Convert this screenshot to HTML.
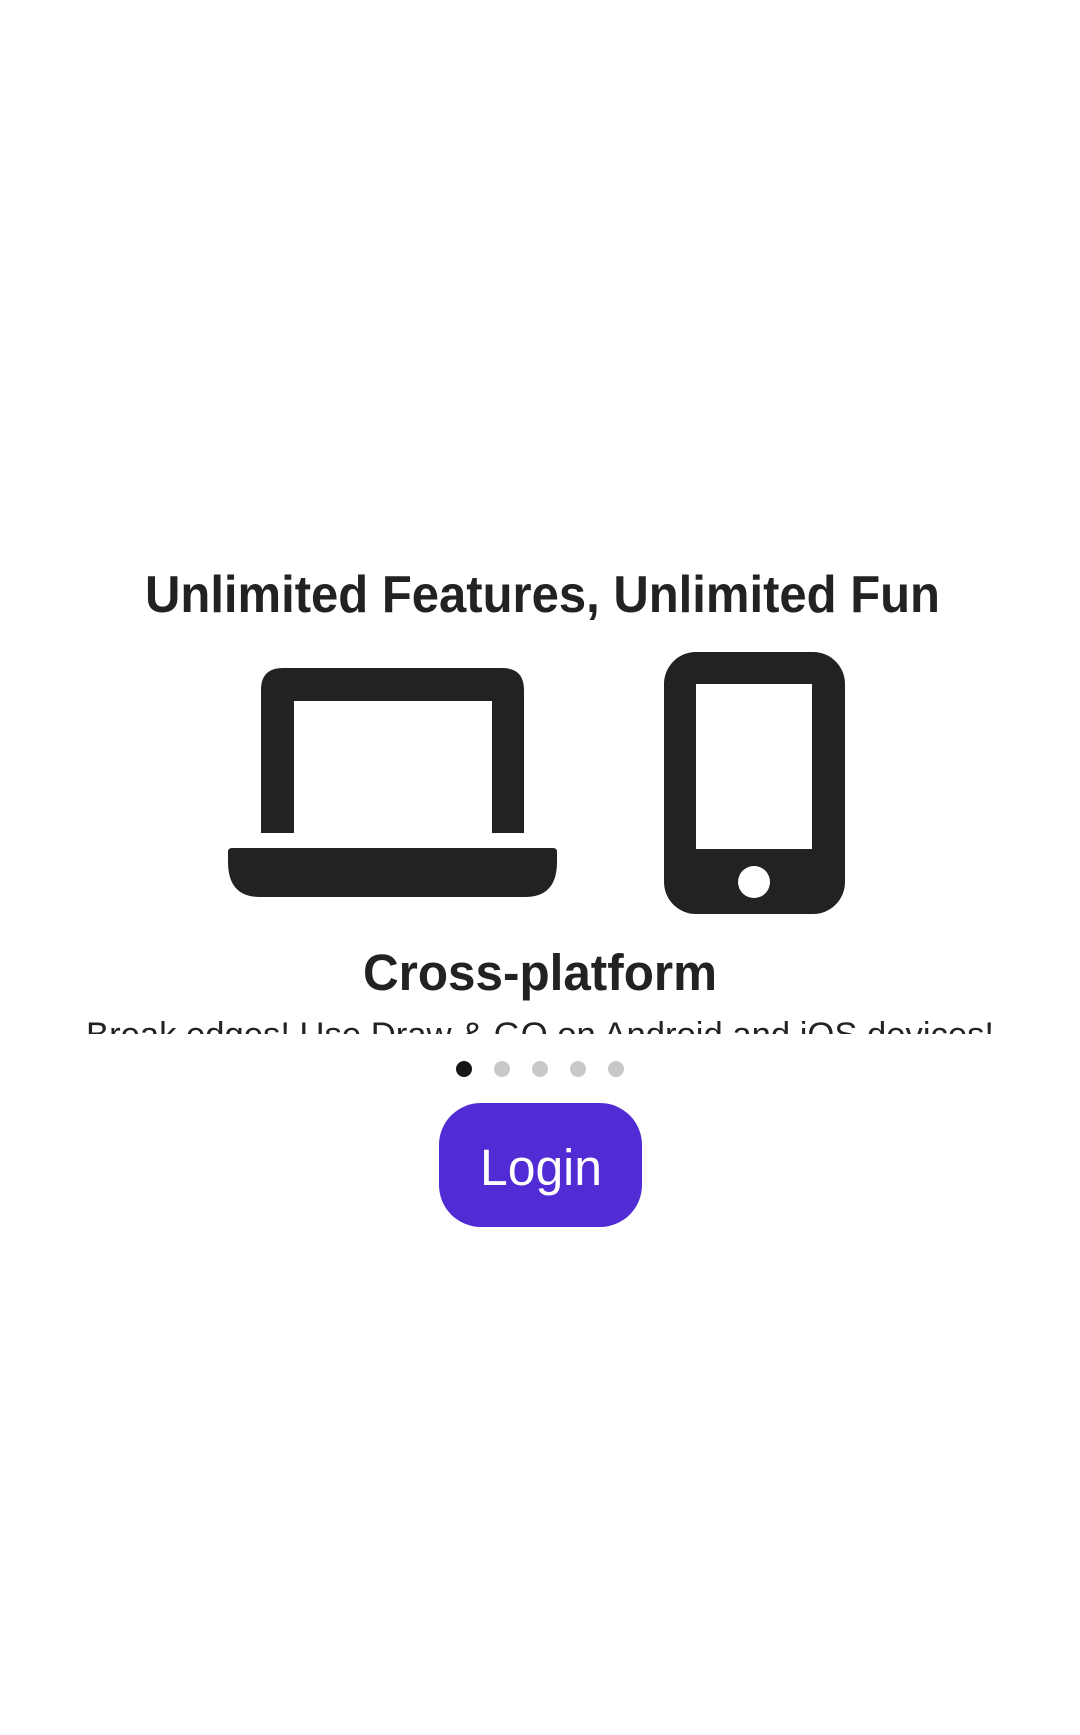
<!DOCTYPE html>
<html><head><meta charset="utf-8"><style>
html,body{margin:0;padding:0;background:#fff;}
body{width:1080px;height:1735px;position:relative;overflow:hidden;font-family:"Liberation Sans",sans-serif;}
svg{position:absolute;left:0;top:0;}
.clip{position:absolute;left:0;top:1010px;width:1080px;height:24px;overflow:hidden;}
.btn{position:absolute;left:439px;top:1103px;width:203px;height:124px;border-radius:42px;background:#512bd4;}
</style></head><body>
<svg width="1080" height="1735" viewBox="0 0 1080 1735">
<text x="145" y="612" font-family="Liberation Sans, sans-serif" font-weight="bold" font-size="52" fill="#222" textLength="795" lengthAdjust="spacingAndGlyphs">Unlimited Features, Unlimited Fun</text>
<!-- laptop -->
<path d="M261 833 V690 Q261 668 283 668 H502 Q524 668 524 690 V833 H492 V701 H294 V833 Z" fill="#222"/>
<path d="M232 848 H553 Q557 848 557 852 V862 Q557 897 525 897 H260 Q228 897 228 862 V852 Q228 848 232 848 Z" fill="#222"/>
<!-- phone -->
<rect x="664" y="652" width="181" height="262" rx="32" fill="#222"/>
<rect x="696" y="684" width="116" height="165" fill="#fff"/>
<ellipse cx="754" cy="882" rx="16" ry="16" fill="#fff"/>
<text x="363" y="990" font-family="Liberation Sans, sans-serif" font-weight="bold" font-size="51" fill="#222" textLength="354" lengthAdjust="spacingAndGlyphs">Cross-platform</text>
<circle cx="464" cy="1069" r="8" fill="#161616"/>
<circle cx="502" cy="1069" r="8" fill="#c8c8c8"/>
<circle cx="540" cy="1069" r="8" fill="#c8c8c8"/>
<circle cx="578" cy="1069" r="8" fill="#c8c8c8"/>
<circle cx="616" cy="1069" r="8" fill="#c8c8c8"/>
</svg>
<div class="clip"><svg width="1080" height="60" viewBox="0 0 1080 60"><text x="86" y="36" font-family="Liberation Sans, sans-serif" font-size="34" fill="#222" textLength="908" lengthAdjust="spacingAndGlyphs">Break edges! Use Draw &amp; GO on Android and iOS devices!</text></svg></div>
<div class="btn"><svg width="203" height="124" viewBox="0 0 203 124"><text x="41" y="82" font-family="Liberation Sans, sans-serif" font-size="51" fill="#fff" textLength="122" lengthAdjust="spacingAndGlyphs">Login</text></svg></div>
</body></html>
